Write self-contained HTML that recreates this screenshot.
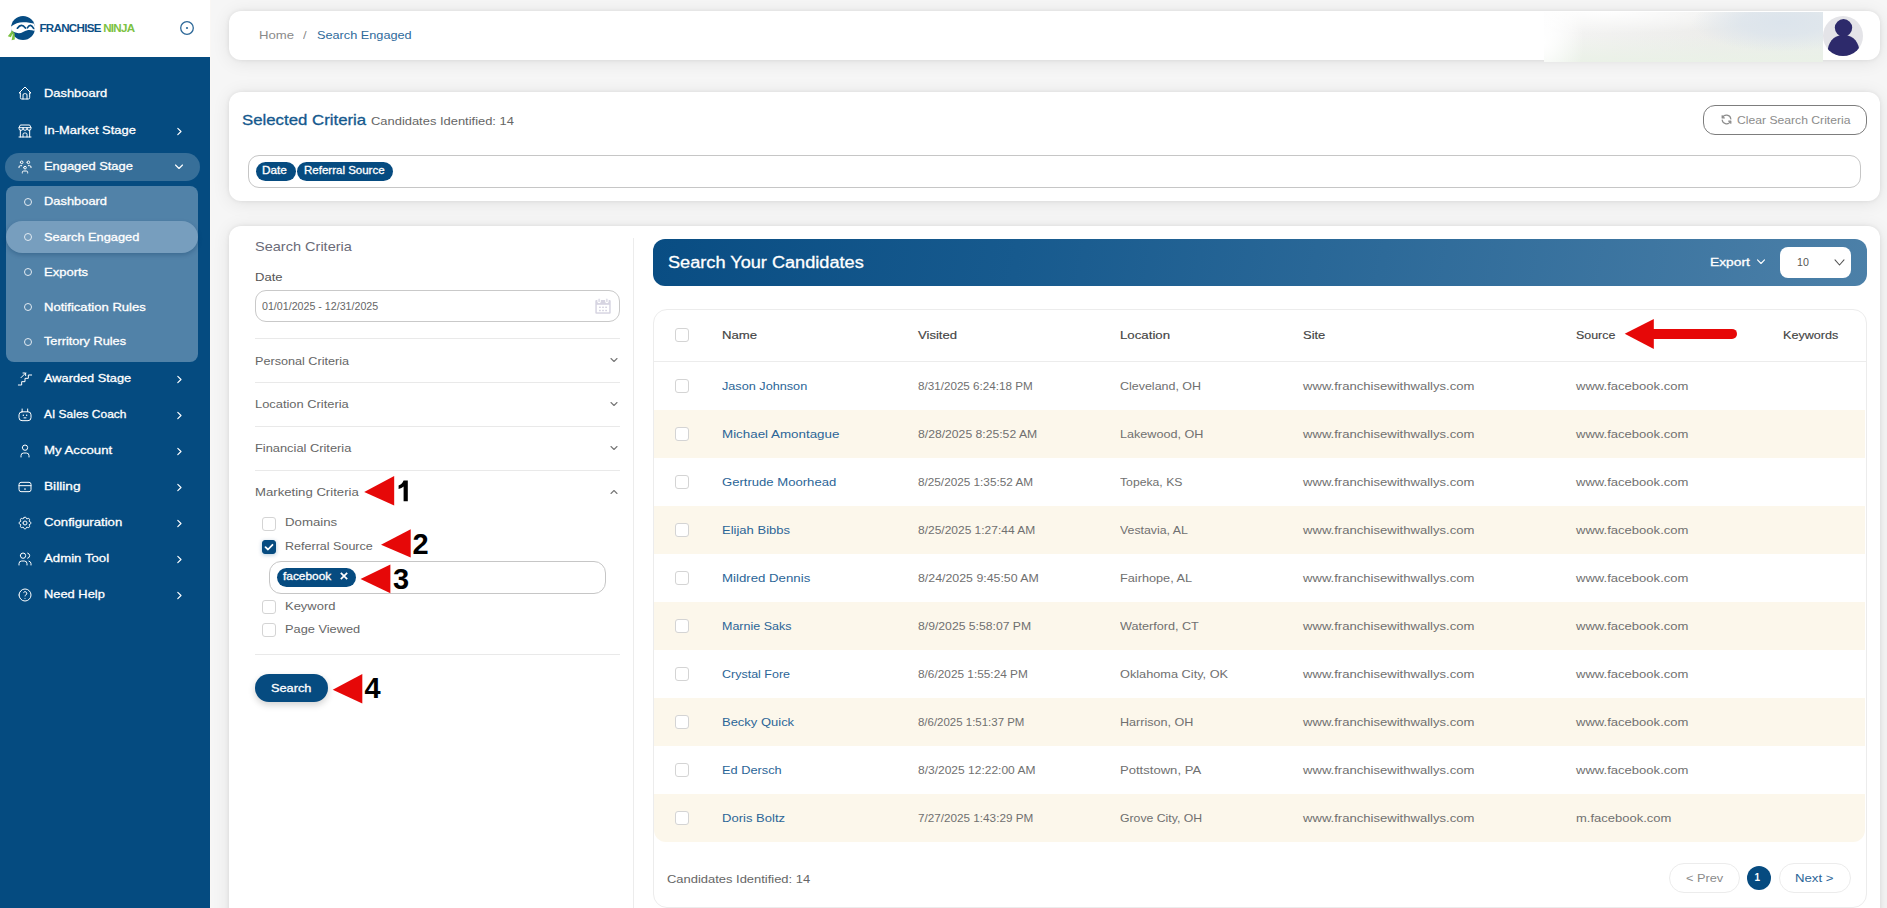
<!DOCTYPE html>
<html><head><meta charset="utf-8">
<style>
*{box-sizing:border-box;margin:0;padding:0}
html,body{width:1887px;height:908px;overflow:hidden}
body{background:#f6f6f6;font-family:"Liberation Sans",sans-serif;position:relative}
.a{position:absolute}
.tx{position:absolute;white-space:pre;transform-origin:0 0}
.card{position:absolute;background:#fff;border-radius:12px;box-shadow:0 0 4px rgba(0,0,0,.08),0 2px 18px rgba(0,0,0,.085)}
.cb{position:absolute;width:14px;height:14px;border:1px solid #d4d4d4;border-radius:3px;background:#fff}
.hl{position:absolute;height:1px;background:#e9e9e9}
svg.ic{position:absolute;fill:none;stroke:#fff;stroke-width:1.5;stroke-linecap:round;stroke-linejoin:round}
.chev{position:absolute;fill:none;stroke:#fff;stroke-width:1.15;stroke-linecap:round;stroke-linejoin:round}
.bul{position:absolute;width:8px;height:8px;border:1.6px solid #e3ebf2;border-radius:50%}
.row{position:absolute;left:654px;width:1211px;height:48px}
.red{position:absolute;fill:#e60808}
.num{position:absolute;font-family:"Liberation Sans",sans-serif;font-weight:700;color:#000;white-space:pre}
</style></head><body>

<!-- ================= SIDEBAR ================= -->
<div class="a" style="left:0;top:0;width:210px;height:908px;background:#054b80"></div>
<div class="a" style="left:0;top:0;width:210px;height:57px;background:#fff"></div>
<div class="a" style="left:210px;top:0;width:1px;height:908px;background:#f9f7f5"></div>
<!-- logo -->
<svg class="a" style="left:6px;top:14px" width="32" height="30" viewBox="0 0 32 30">
  <defs><clipPath id="lgc"><circle cx="17" cy="14" r="12"/></clipPath></defs>
  <circle cx="17" cy="14" r="12" fill="#064c83"/>
  <path clip-path="url(#lgc)" d="M3 14.2 C7 10.5 12 8.3 17 8.3 C22 8.3 26 9 30 10.3 L30 17.2 C27 16.6 24 15.6 21.3 16.2 C18 17 15.5 19.6 12.5 19.3 C9.5 19 7.5 17.5 5.5 16.8 L3 16.5 Z" fill="#fff"/>
  <path d="M11.4 14.2 Q15.4 8.6 19.4 14 M21.4 13.8 Q24.4 8.6 27.6 14.4" stroke="#064c83" stroke-width="1.7" fill="none" stroke-linecap="round"/>
  <path d="M6.3 16.6 L1.8 22.2 L4.9 23.2 L7.3 18 Z M7.3 18 L5.6 26.2 L8.8 25.6 L8.6 19.2 Z" fill="#7cc242"/>
</svg>
<div class="tx" style="left:39.5px;top:20.5px;font-size:11.6px;line-height:14px;font-weight:700;color:#0d4f86;letter-spacing:-0.72px">FRANCHISE <span style="color:#7cc242">NINJA</span></div>
<svg class="a" style="left:179px;top:20px" width="16" height="16" viewBox="0 0 16 16"><circle cx="8" cy="8" r="6.3" fill="none" stroke="#2d6898" stroke-width="1.3"/><circle cx="8" cy="8" r="1.1" fill="#2d6898"/></svg>

<!-- engaged pill + submenu -->
<div class="a" style="left:5px;top:153px;width:194.5px;height:28px;border-radius:14px;background:#376f99"></div>
<div class="a" style="left:6px;top:186px;width:192px;height:176px;border-radius:8px;background:#5182a8"></div>
<div class="a" style="left:6px;top:221px;width:192px;height:32px;border-radius:16px;background:#779ebe;box-shadow:0 2px 4px rgba(0,40,80,.25)"></div>

<!-- icons -->
<svg class="ic" style="left:17px;top:85px" width="16" height="16" viewBox="0 0 24 24"><path d="M5 12l-2 0l9 -9l9 9l-2 0"/><path d="M5 12v7a2 2 0 0 0 2 2h10a2 2 0 0 0 2 -2v-7"/><path d="M9 21v-6a2 2 0 0 1 2 -2h2a2 2 0 0 1 2 2v6"/></svg>
<svg class="ic" style="left:17px;top:123px" width="16" height="16" viewBox="0 0 24 24"><path d="M3 21l18 0"/><path d="M3 7v1a3 3 0 0 0 6 0v-1m0 1a3 3 0 0 0 6 0v-1m0 1a3 3 0 0 0 6 0v-1h-18l2 -4h14l2 4"/><path d="M5 21l0 -10.15"/><path d="M19 21l0 -10.15"/><path d="M9 21v-4a2 2 0 0 1 2 -2h2a2 2 0 0 1 2 2v4"/></svg>
<svg class="ic" style="left:17px;top:159px" width="16" height="16" viewBox="0 0 24 24"><path d="M10 13a2 2 0 1 0 4 0a2 2 0 0 0 -4 0"/><path d="M8 21v-1a2 2 0 0 1 2 -2h4a2 2 0 0 1 2 2v1"/><path d="M15 5a2 2 0 1 0 4 0a2 2 0 0 0 -4 0"/><path d="M17 10h2a2 2 0 0 1 2 2v1"/><path d="M5 5a2 2 0 1 0 4 0a2 2 0 0 0 -4 0"/><path d="M3 13v-1a2 2 0 0 1 2 -2h2"/></svg>
<svg class="ic" style="left:17px;top:371px" width="16" height="16" viewBox="0 0 24 24"><path d="M22 6h-5v5h-5v5h-5v5h-5"/><path d="M6 10l7 -7"/><path d="M9 3h4v4"/></svg>
<svg class="ic" style="left:17px;top:407px" width="16" height="16" viewBox="0 0 24 24"><rect x="3" y="7.2" width="18" height="13.3" rx="4.5"/><path d="M7.7 3v4"/><path d="M16 3v4"/><path d="M9.5 12.5v.01" stroke-width="2.2"/><path d="M14.5 12.5v.01" stroke-width="2.2"/><path d="M10.5 16.3h3"/></svg>
<svg class="ic" style="left:17px;top:443px" width="16" height="16" viewBox="0 0 24 24"><path d="M8 7a4 4 0 1 0 8 0a4 4 0 0 0 -8 0"/><path d="M6 21v-2a4 4 0 0 1 4 -4h4a4 4 0 0 1 4 4v2"/></svg>
<svg class="ic" style="left:17px;top:479px" width="16" height="16" viewBox="0 0 24 24"><path d="M3 8a3 3 0 0 1 3 -3h12a3 3 0 0 1 3 3v8a3 3 0 0 1 -3 3h-12a3 3 0 0 1 -3 -3z"/><path d="M3 10h18"/><path d="M12 15v.01" stroke-width="2.5"/></svg>
<svg class="ic" style="left:17px;top:515px" width="16" height="16" viewBox="0 0 24 24"><path d="M10.325 4.317c.426 -1.756 2.924 -1.756 3.35 0a1.724 1.724 0 0 0 2.573 1.066c1.543 -.94 3.31 .826 2.37 2.37a1.724 1.724 0 0 0 1.065 2.572c1.756 .426 1.756 2.924 0 3.35a1.724 1.724 0 0 0 -1.066 2.573c.94 1.543 -.826 3.31 -2.37 2.37a1.724 1.724 0 0 0 -2.572 1.065c-.426 1.756 -2.924 1.756 -3.35 0a1.724 1.724 0 0 0 -2.573 -1.066c-1.543 .94 -3.31 -.826 -2.37 -2.37a1.724 1.724 0 0 0 -1.065 -2.572c-1.756 -.426 -1.756 -2.924 0 -3.35a1.724 1.724 0 0 0 1.066 -2.573c-.94 -1.543 .826 -3.31 2.37 -2.37c1 .608 2.296 .07 2.572 -1.065z"/><path d="M9 12a3 3 0 1 0 6 0a3 3 0 0 0 -6 0"/></svg>
<svg class="ic" style="left:17px;top:551px" width="16" height="16" viewBox="0 0 24 24"><path d="M5 7a4 4 0 1 0 8 0a4 4 0 1 0 -8 0"/><path d="M3 21v-2a4 4 0 0 1 4 -4h4a4 4 0 0 1 4 4v2"/><path d="M16 3.13a4 4 0 0 1 0 7.75"/><path d="M21 21v-2a4 4 0 0 0 -3 -3.85"/></svg>
<svg class="ic" style="left:17px;top:587px" width="16" height="16" viewBox="0 0 24 24"><path d="M12 12m-9 0a9 9 0 1 0 18 0a9 9 0 1 0 -18 0"/><path d="M12 17v.01"/><path d="M12 13.5a1.5 1.5 0 0 1 1 -1.5a2.6 2.6 0 1 0 -3 -4"/></svg>

<!-- chevrons -->
<svg class="chev" style="left:175px;top:126.7px" width="8" height="9" viewBox="0 0 8 9"><path d="M2.8 1.3 L6 4.5 L2.8 7.7"/></svg>
<svg class="chev" style="left:174px;top:162px" width="10" height="9" viewBox="0 0 10 9"><path d="M1.5 3 L5 6.5 L8.5 3"/></svg>
<svg class="chev" style="left:175px;top:374.7px" width="8" height="9" viewBox="0 0 8 9"><path d="M2.8 1.3 L6 4.5 L2.8 7.7"/></svg>
<svg class="chev" style="left:175px;top:410.7px" width="8" height="9" viewBox="0 0 8 9"><path d="M2.8 1.3 L6 4.5 L2.8 7.7"/></svg>
<svg class="chev" style="left:175px;top:446.7px" width="8" height="9" viewBox="0 0 8 9"><path d="M2.8 1.3 L6 4.5 L2.8 7.7"/></svg>
<svg class="chev" style="left:175px;top:482.7px" width="8" height="9" viewBox="0 0 8 9"><path d="M2.8 1.3 L6 4.5 L2.8 7.7"/></svg>
<svg class="chev" style="left:175px;top:518.7px" width="8" height="9" viewBox="0 0 8 9"><path d="M2.8 1.3 L6 4.5 L2.8 7.7"/></svg>
<svg class="chev" style="left:175px;top:554.7px" width="8" height="9" viewBox="0 0 8 9"><path d="M2.8 1.3 L6 4.5 L2.8 7.7"/></svg>
<svg class="chev" style="left:175px;top:590.7px" width="8" height="9" viewBox="0 0 8 9"><path d="M2.8 1.3 L6 4.5 L2.8 7.7"/></svg>
<!-- bullets -->
<div class="bul" style="left:24px;top:197.5px"></div>
<div class="bul" style="left:24px;top:233px"></div>
<div class="bul" style="left:24px;top:268px"></div>
<div class="bul" style="left:24px;top:303px"></div>
<div class="bul" style="left:24px;top:338px"></div>

<!-- ================= TOP CARDS ================= -->
<div class="card" style="left:228.5px;top:10.5px;width:1651.5px;height:49.5px"></div>
<div class="a" style="left:1544px;top:12px;width:279px;height:50px;background:
 radial-gradient(ellipse 90px 30px at 238px 10px, rgba(220,228,236,1) 0%, rgba(220,228,236,.8) 45%, rgba(220,228,236,0) 100%),
 radial-gradient(ellipse 180px 22px at 60px 0px, rgba(255,255,255,.95) 0%, rgba(255,255,255,0) 100%),
 radial-gradient(ellipse 40px 60px at 0px 30px, rgba(255,255,255,1) 0%, rgba(255,255,255,0) 100%),
 linear-gradient(180deg, rgba(234,241,231,0) 45%, rgba(234,241,231,1) 100%),
 linear-gradient(90deg,#fbfbfb 0%,#f2f2f1 14%,#ededeb 60%,#eaeeec 100%)"></div>
<svg class="a" style="left:1823px;top:16px" width="40" height="40" viewBox="0 0 40 40">
 <defs><clipPath id="avc"><circle cx="20" cy="20" r="20"/></clipPath></defs>
 <circle cx="20" cy="20" r="20" fill="#e4e4e8"/>
 <g clip-path="url(#avc)" fill="#2d2a6b"><circle cx="20.5" cy="11.8" r="8.7"/><path d="M4.5 37 C4.5 27 10 19 20.5 19 C31 19 36.5 27 36.5 37 C36.5 39.5 34 40 20.5 40 C7 40 4.5 39.5 4.5 37 Z"/></g>
</svg>

<div class="card" style="left:228.5px;top:92px;width:1651.5px;height:108.5px"></div>
<div class="a" style="left:1703px;top:105px;width:164px;height:30px;border:1px solid #7d7d7d;border-radius:12px"></div>
<svg class="a" style="left:1720px;top:113px" width="13" height="13" viewBox="0 0 24 24" fill="none" stroke="#8c8c8c" stroke-width="2.2" stroke-linecap="round" stroke-linejoin="round"><path d="M20 11a8.1 8.1 0 0 0 -15.5 -2m-.5 -4v4h4"/><path d="M4 13a8.1 8.1 0 0 0 15.5 2m.5 4v-4h-4"/></svg>
<div class="a" style="left:248px;top:155px;width:1612.5px;height:32.5px;border:1px solid #c6c6c6;border-radius:11px"></div>
<div class="a" style="left:256px;top:162px;width:40px;height:19px;border-radius:10px;background:#064b80"></div>
<div class="a" style="left:297.3px;top:162px;width:95.4px;height:19px;border-radius:10px;background:#064b80"></div>

<!-- ================= MAIN CARD ================= -->
<div class="card" style="left:228.5px;top:226px;width:1651.5px;height:720px"></div>
<div class="a" style="left:633px;top:238px;width:1px;height:680px;background:#ececec"></div>
<!-- date input -->
<div class="a" style="left:255px;top:290px;width:365px;height:32px;border:1px solid #c9c9c9;border-radius:11px"></div>
<svg class="a" style="left:595px;top:298px" width="16" height="16" viewBox="0 0 16 16"><rect x="0.3" y="2" width="15.4" height="13.7" rx="1" fill="#d6d4e1"/><rect x="1.8" y="6.8" width="12.4" height="7.5" fill="#fff"/><rect x="2.9" y="0" width="2.4" height="4.6" rx="1.2" fill="#d6d4e1" stroke="#fff" stroke-width="1.1"/><rect x="10.7" y="0" width="2.4" height="4.6" rx="1.2" fill="#d6d4e1" stroke="#fff" stroke-width="1.1"/><g fill="#d6d4e1"><rect x="4" y="8.6" width="1.8" height="1.4"/><rect x="7.1" y="8.6" width="1.8" height="1.4"/><rect x="10.2" y="8.6" width="1.8" height="1.4"/><rect x="4" y="11.8" width="1.8" height="1.4"/><rect x="7.1" y="11.8" width="1.8" height="1.4"/><rect x="10.2" y="11.8" width="1.8" height="1.4"/></g></svg>
<div class="hl" style="left:255px;top:338px;width:365px"></div>
<div class="hl" style="left:255px;top:382px;width:365px"></div>
<div class="hl" style="left:255px;top:426px;width:365px"></div>
<div class="hl" style="left:255px;top:470px;width:365px"></div>
<div class="hl" style="left:255px;top:654px;width:365px"></div>
<svg class="a" style="left:609px;top:356px" width="10" height="8" viewBox="0 0 10 8" fill="none" stroke="#777" stroke-width="1.1" stroke-linecap="round" stroke-linejoin="round"><path d="M2 2.5 L5 5.5 L8 2.5"/></svg>
<svg class="a" style="left:609px;top:400px" width="10" height="8" viewBox="0 0 10 8" fill="none" stroke="#777" stroke-width="1.1" stroke-linecap="round" stroke-linejoin="round"><path d="M2 2.5 L5 5.5 L8 2.5"/></svg>
<svg class="a" style="left:609px;top:444px" width="10" height="8" viewBox="0 0 10 8" fill="none" stroke="#777" stroke-width="1.1" stroke-linecap="round" stroke-linejoin="round"><path d="M2 2.5 L5 5.5 L8 2.5"/></svg>
<svg class="a" style="left:609px;top:488px" width="10" height="8" viewBox="0 0 10 8" fill="none" stroke="#777" stroke-width="1.1" stroke-linecap="round" stroke-linejoin="round"><path d="M2 5.5 L5 2.5 L8 5.5"/></svg>
<!-- checkboxes -->
<div class="cb" style="left:262px;top:516.5px"></div>
<div class="cb" style="left:262px;top:539.5px;background:#064b80;border-color:#064b80;box-shadow:0 1px 4px rgba(6,75,128,.3)"></div>
<svg class="a" style="left:262px;top:539.5px" width="14" height="14" viewBox="0 0 14 14" fill="none" stroke="#fff" stroke-width="1.8" stroke-linecap="round" stroke-linejoin="round"><path d="M3.5 7.2 L6 9.5 L10.5 4.8"/></svg>
<div class="a" style="left:269px;top:561px;width:337px;height:33px;border:1px solid #c6c6c6;border-radius:12px"></div>
<div class="a" style="left:277px;top:568px;width:79px;height:19px;border-radius:10px;background:#064b80"></div>
<svg class="a" style="left:339.5px;top:572.2px" width="8" height="8" viewBox="0 0 8 8" fill="none" stroke="#fff" stroke-width="1.7"><path d="M0.8 0.8 L7.2 7.2 M7.2 0.8 L0.8 7.2"/></svg>
<div class="cb" style="left:262px;top:599.5px"></div>
<div class="cb" style="left:262px;top:622.5px"></div>
<div class="a" style="left:255px;top:674px;width:73px;height:28px;border-radius:14px;background:#064b80;box-shadow:0 3px 7px rgba(0,0,0,.18)"></div>

<!-- ================= RIGHT PANEL ================= -->
<div class="a" style="left:653px;top:239px;width:1214px;height:47px;border-radius:12px;background:linear-gradient(100deg,#094d83 0%,#175a8e 30%,#2d6a99 60%,#4c80a8 100%)"></div>
<svg class="a" style="left:1756px;top:258px" width="10" height="8" viewBox="0 0 10 8" fill="none" stroke="#fff" stroke-width="1.1" stroke-linecap="round" stroke-linejoin="round"><path d="M1.5 1.8 L5 5.5 L8.5 1.8"/></svg>
<div class="a" style="left:1779.5px;top:247px;width:71.5px;height:31px;border-radius:8px;background:#fff"></div>
<svg class="a" style="left:1834px;top:257.5px" width="11" height="9" viewBox="0 0 11 9" fill="none" stroke="#555" stroke-width="1.05" stroke-linecap="round" stroke-linejoin="round"><path d="M1 1.8 L5.5 7 L10 1.8"/></svg>

<!-- table card -->
<div class="a" style="left:653px;top:309px;width:1213.5px;height:598.5px;border:1px solid #ececec;border-radius:14px;background:#fff"></div>
<div class="a" style="left:654px;top:361px;width:1212px;height:1px;background:#ececec"></div>
<div class="row" style="top:410px;background:#fcf7eb"></div>
<div class="row" style="top:506px;background:#fcf7eb"></div>
<div class="row" style="top:602px;background:#fcf7eb"></div>
<div class="row" style="top:698px;background:#fcf7eb"></div>
<div class="row" style="top:794px;background:#fcf7eb;border-radius:0 0 12px 12px"></div>
<div class="cb" style="left:675px;top:328px"></div>
<div class="cb" style="left:675px;top:379px"></div>
<div class="cb" style="left:675px;top:427px"></div>
<div class="cb" style="left:675px;top:475px"></div>
<div class="cb" style="left:675px;top:523px"></div>
<div class="cb" style="left:675px;top:571px"></div>
<div class="cb" style="left:675px;top:619px"></div>
<div class="cb" style="left:675px;top:667px"></div>
<div class="cb" style="left:675px;top:715px"></div>
<div class="cb" style="left:675px;top:763px"></div>
<div class="cb" style="left:675px;top:811px"></div>

<!-- pagination -->
<div class="a" style="left:1669px;top:863px;width:70.5px;height:29.5px;border:1px solid #ececec;border-radius:15px"></div>
<div class="a" style="left:1747px;top:865.7px;width:24px;height:24px;border-radius:12px;background:#064b80"></div>
<div class="tx" style="left:1754.5px;top:870.5px;font-size:10px;line-height:14px;font-weight:700;color:#fff">1</div>
<div class="a" style="left:1778.5px;top:863px;width:72px;height:29.5px;border:1px solid #ececec;border-radius:15px"></div>

<!-- ================= TEXTS ================= -->
<div class='tx' style="left:44.10px;top:86px;font-size:11.5px;line-height:14.95px;font-weight:400;color:#ffffff;transform:scaleX(1.1219);-webkit-text-stroke:0.3px #ffffff;">Dashboard</div>
<div class='tx' style="left:44.10px;top:123px;font-size:11.5px;line-height:14.95px;font-weight:400;color:#ffffff;transform:scaleX(1.1221);-webkit-text-stroke:0.3px #ffffff;">In-Market Stage</div>
<div class='tx' style="left:44.10px;top:159px;font-size:11.5px;line-height:14.95px;font-weight:400;color:#ffffff;transform:scaleX(1.1201);-webkit-text-stroke:0.3px #ffffff;">Engaged Stage</div>
<div class='tx' style="left:44.10px;top:371px;font-size:11.5px;line-height:14.95px;font-weight:400;color:#ffffff;transform:scaleX(1.1119);-webkit-text-stroke:0.3px #ffffff;">Awarded Stage</div>
<div class='tx' style="left:44.10px;top:407px;font-size:11.5px;line-height:14.95px;font-weight:400;color:#ffffff;transform:scaleX(1.0400);-webkit-text-stroke:0.3px #ffffff;">AI Sales Coach</div>
<div class='tx' style="left:44.10px;top:443px;font-size:11.5px;line-height:14.95px;font-weight:400;color:#ffffff;transform:scaleX(1.1462);-webkit-text-stroke:0.3px #ffffff;">My Account</div>
<div class='tx' style="left:44.10px;top:479px;font-size:11.5px;line-height:14.95px;font-weight:400;color:#ffffff;transform:scaleX(1.1891);-webkit-text-stroke:0.3px #ffffff;">Billing</div>
<div class='tx' style="left:44.10px;top:515px;font-size:11.5px;line-height:14.95px;font-weight:400;color:#ffffff;transform:scaleX(1.1438);-webkit-text-stroke:0.3px #ffffff;">Configuration</div>
<div class='tx' style="left:44.10px;top:551px;font-size:11.5px;line-height:14.95px;font-weight:400;color:#ffffff;transform:scaleX(1.1493);-webkit-text-stroke:0.3px #ffffff;">Admin Tool</div>
<div class='tx' style="left:44.10px;top:587px;font-size:11.5px;line-height:14.95px;font-weight:400;color:#ffffff;transform:scaleX(1.1192);-webkit-text-stroke:0.3px #ffffff;">Need Help</div>
<div class='tx' style="left:44.10px;top:194px;font-size:11.5px;line-height:14.95px;font-weight:400;color:#ffffff;transform:scaleX(1.1200);-webkit-text-stroke:0.3px #ffffff;">Dashboard</div>
<div class='tx' style="left:44.10px;top:230px;font-size:11.5px;line-height:14.95px;font-weight:400;color:#ffffff;transform:scaleX(1.1123);-webkit-text-stroke:0.3px #ffffff;">Search Engaged</div>
<div class='tx' style="left:44.10px;top:265px;font-size:11.5px;line-height:14.95px;font-weight:400;color:#ffffff;transform:scaleX(1.1316);-webkit-text-stroke:0.3px #ffffff;">Exports</div>
<div class='tx' style="left:44.10px;top:300px;font-size:11.5px;line-height:14.95px;font-weight:400;color:#ffffff;transform:scaleX(1.1381);-webkit-text-stroke:0.3px #ffffff;">Notification Rules</div>
<div class='tx' style="left:44.10px;top:334px;font-size:11.5px;line-height:14.95px;font-weight:400;color:#ffffff;transform:scaleX(1.1061);-webkit-text-stroke:0.3px #ffffff;">Territory Rules</div>
<div class='tx' style="left:259.10px;top:28px;font-size:11.5px;line-height:14.95px;font-weight:400;color:#8a8a8a;transform:scaleX(1.1419);">Home</div>
<div class='tx' style="left:303.10px;top:28px;font-size:11.5px;line-height:14.95px;font-weight:400;color:#8a8a8a;transform:scaleX(1.1289);">/</div>
<div class='tx' style="left:316.50px;top:28px;font-size:11.5px;line-height:14.95px;font-weight:400;color:#2f6a9b;transform:scaleX(1.1052);">Search Engaged</div>
<div class='tx' style="left:241.70px;top:111px;font-size:14.5px;line-height:18.85px;font-weight:400;color:#15598e;transform:scaleX(1.1583);-webkit-text-stroke:0.3px #15598e;">Selected Criteria</div>
<div class='tx' style="left:370.50px;top:114px;font-size:11.5px;line-height:14.95px;font-weight:400;color:#666666;transform:scaleX(1.1233);">Candidates Identified: 14</div>
<div class='tx' style="left:1736.50px;top:113px;font-size:11px;line-height:14.3px;font-weight:400;color:#8c8c8c;transform:scaleX(1.1052);">Clear Search Criteria</div>
<div class='tx' style="left:262.20px;top:164px;font-size:10.5px;line-height:13.65px;font-weight:400;color:#ffffff;transform:scaleX(1.1233);-webkit-text-stroke:0.3px #ffffff;">Date</div>
<div class='tx' style="left:303.50px;top:164px;font-size:10.5px;line-height:13.65px;font-weight:400;color:#ffffff;transform:scaleX(1.0961);-webkit-text-stroke:0.3px #ffffff;">Referral Source</div>
<div class='tx' style="left:254.70px;top:238px;font-size:13.3px;line-height:17.29px;font-weight:400;color:#6b6b78;transform:scaleX(1.0925);">Search Criteria</div>
<div class='tx' style="left:255.00px;top:270px;font-size:11px;line-height:14.3px;font-weight:400;color:#555555;transform:scaleX(1.1865);">Date</div>
<div class='tx' style="left:262.10px;top:300px;font-size:10px;line-height:13.0px;font-weight:400;color:#666666;transform:scaleX(1.0659);">01/01/2025 - 12/31/2025</div>
<div class='tx' style="left:254.50px;top:354px;font-size:11.5px;line-height:14.95px;font-weight:400;color:#666666;transform:scaleX(1.0986);">Personal Criteria</div>
<div class='tx' style="left:254.50px;top:397px;font-size:11.5px;line-height:14.95px;font-weight:400;color:#666666;transform:scaleX(1.1192);">Location Criteria</div>
<div class='tx' style="left:254.50px;top:441px;font-size:11.5px;line-height:14.95px;font-weight:400;color:#666666;transform:scaleX(1.1163);">Financial Criteria</div>
<div class='tx' style="left:254.50px;top:485px;font-size:11.5px;line-height:14.95px;font-weight:400;color:#666666;transform:scaleX(1.1432);">Marketing Criteria</div>
<div class='tx' style="left:284.50px;top:515px;font-size:11.5px;line-height:14.95px;font-weight:400;color:#666666;transform:scaleX(1.1511);">Domains</div>
<div class='tx' style="left:284.50px;top:539px;font-size:11.5px;line-height:14.95px;font-weight:400;color:#666666;transform:scaleX(1.0899);">Referral Source</div>
<div class='tx' style="left:282.80px;top:570px;font-size:10.5px;line-height:13.65px;font-weight:400;color:#ffffff;transform:scaleX(1.1315);-webkit-text-stroke:0.3px #ffffff;">facebook</div>
<div class='tx' style="left:284.50px;top:599px;font-size:11.5px;line-height:14.95px;font-weight:400;color:#666666;transform:scaleX(1.1269);">Keyword</div>
<div class='tx' style="left:284.50px;top:622px;font-size:11.5px;line-height:14.95px;font-weight:400;color:#666666;transform:scaleX(1.1117);">Page Viewed</div>
<div class='tx' style="left:270.70px;top:681px;font-size:11.5px;line-height:14.95px;font-weight:400;color:#ffffff;transform:scaleX(1.1090);-webkit-text-stroke:0.3px #ffffff;">Search</div>
<div class='tx' style="left:668.40px;top:253px;font-size:16px;line-height:20.8px;font-weight:400;color:#ffffff;transform:scaleX(1.1342);-webkit-text-stroke:0.3px #ffffff;">Search Your Candidates</div>
<div class='tx' style="left:1710.00px;top:255px;font-size:11px;line-height:14.3px;font-weight:400;color:#ffffff;transform:scaleX(1.2534);-webkit-text-stroke:0.3px #ffffff;">Export</div>
<div class='tx' style="left:1796.90px;top:255px;font-size:11px;line-height:14.3px;font-weight:400;color:#555555;transform:scaleX(0.9689);">10</div>
<div class='tx' style="left:721.70px;top:328px;font-size:11.5px;line-height:14.95px;font-weight:400;color:#444444;transform:scaleX(1.1453);-webkit-text-stroke:0.15px #444">Name</div>
<div class='tx' style="left:917.50px;top:328px;font-size:11.5px;line-height:14.95px;font-weight:400;color:#444444;transform:scaleX(1.1377);-webkit-text-stroke:0.15px #444">Visited</div>
<div class='tx' style="left:1119.50px;top:328px;font-size:11.5px;line-height:14.95px;font-weight:400;color:#444444;transform:scaleX(1.1510);-webkit-text-stroke:0.15px #444">Location</div>
<div class='tx' style="left:1302.50px;top:328px;font-size:11.5px;line-height:14.95px;font-weight:400;color:#444444;transform:scaleX(1.1260);-webkit-text-stroke:0.15px #444">Site</div>
<div class='tx' style="left:1575.50px;top:328px;font-size:11.5px;line-height:14.95px;font-weight:400;color:#444444;transform:scaleX(1.0808);-webkit-text-stroke:0.15px #444">Source</div>
<div class='tx' style="left:1782.50px;top:328px;font-size:11.5px;line-height:14.95px;font-weight:400;color:#444444;transform:scaleX(1.0949);-webkit-text-stroke:0.15px #444">Keywords</div>
<div class='tx' style="left:721.50px;top:379px;font-size:11.5px;line-height:14.95px;font-weight:400;color:#2b6597;transform:scaleX(1.1011);">Jason Johnson</div>
<div class='tx' style="left:917.50px;top:379px;font-size:11.5px;line-height:14.95px;font-weight:400;color:#707070;transform:scaleX(1.0136);">8/31/2025 6:24:18 PM</div>
<div class='tx' style="left:1119.50px;top:379px;font-size:11.5px;line-height:14.95px;font-weight:400;color:#707070;transform:scaleX(1.0841);">Cleveland, OH</div>
<div class='tx' style="left:1302.80px;top:379px;font-size:11.5px;line-height:14.95px;font-weight:400;color:#707070;transform:scaleX(1.1366);">www.franchisewithwallys.com</div>
<div class='tx' style="left:1575.50px;top:379px;font-size:11.5px;line-height:14.95px;font-weight:400;color:#707070;transform:scaleX(1.1348);">www.facebook.com</div>
<div class='tx' style="left:721.50px;top:427px;font-size:11.5px;line-height:14.95px;font-weight:400;color:#2b6597;transform:scaleX(1.1618);">Michael Amontague</div>
<div class='tx' style="left:917.50px;top:427px;font-size:11.5px;line-height:14.95px;font-weight:400;color:#707070;transform:scaleX(1.0587);">8/28/2025 8:25:52 AM</div>
<div class='tx' style="left:1119.50px;top:427px;font-size:11.5px;line-height:14.95px;font-weight:400;color:#707070;transform:scaleX(1.0962);">Lakewood, OH</div>
<div class='tx' style="left:1302.80px;top:427px;font-size:11.5px;line-height:14.95px;font-weight:400;color:#707070;transform:scaleX(1.1366);">www.franchisewithwallys.com</div>
<div class='tx' style="left:1575.50px;top:427px;font-size:11.5px;line-height:14.95px;font-weight:400;color:#707070;transform:scaleX(1.1348);">www.facebook.com</div>
<div class='tx' style="left:721.50px;top:475px;font-size:11.5px;line-height:14.95px;font-weight:400;color:#2b6597;transform:scaleX(1.1381);">Gertrude Moorhead</div>
<div class='tx' style="left:917.50px;top:475px;font-size:11.5px;line-height:14.95px;font-weight:400;color:#707070;transform:scaleX(1.0220);">8/25/2025 1:35:52 AM</div>
<div class='tx' style="left:1119.50px;top:475px;font-size:11.5px;line-height:14.95px;font-weight:400;color:#707070;transform:scaleX(1.0618);">Topeka, KS</div>
<div class='tx' style="left:1302.80px;top:475px;font-size:11.5px;line-height:14.95px;font-weight:400;color:#707070;transform:scaleX(1.1366);">www.franchisewithwallys.com</div>
<div class='tx' style="left:1575.50px;top:475px;font-size:11.5px;line-height:14.95px;font-weight:400;color:#707070;transform:scaleX(1.1348);">www.facebook.com</div>
<div class='tx' style="left:721.50px;top:523px;font-size:11.5px;line-height:14.95px;font-weight:400;color:#2b6597;transform:scaleX(1.1321);">Elijah Bibbs</div>
<div class='tx' style="left:917.50px;top:523px;font-size:11.5px;line-height:14.95px;font-weight:400;color:#707070;transform:scaleX(1.0417);">8/25/2025 1:27:44 AM</div>
<div class='tx' style="left:1119.50px;top:523px;font-size:11.5px;line-height:14.95px;font-weight:400;color:#707070;transform:scaleX(1.0723);">Vestavia, AL</div>
<div class='tx' style="left:1302.80px;top:523px;font-size:11.5px;line-height:14.95px;font-weight:400;color:#707070;transform:scaleX(1.1366);">www.franchisewithwallys.com</div>
<div class='tx' style="left:1575.50px;top:523px;font-size:11.5px;line-height:14.95px;font-weight:400;color:#707070;transform:scaleX(1.1348);">www.facebook.com</div>
<div class='tx' style="left:721.50px;top:571px;font-size:11.5px;line-height:14.95px;font-weight:400;color:#2b6597;transform:scaleX(1.1505);">Mildred Dennis</div>
<div class='tx' style="left:917.50px;top:571px;font-size:11.5px;line-height:14.95px;font-weight:400;color:#707070;transform:scaleX(1.0740);">8/24/2025 9:45:50 AM</div>
<div class='tx' style="left:1119.50px;top:571px;font-size:11.5px;line-height:14.95px;font-weight:400;color:#707070;transform:scaleX(1.1056);">Fairhope, AL</div>
<div class='tx' style="left:1302.80px;top:571px;font-size:11.5px;line-height:14.95px;font-weight:400;color:#707070;transform:scaleX(1.1366);">www.franchisewithwallys.com</div>
<div class='tx' style="left:1575.50px;top:571px;font-size:11.5px;line-height:14.95px;font-weight:400;color:#707070;transform:scaleX(1.1348);">www.facebook.com</div>
<div class='tx' style="left:721.50px;top:619px;font-size:11.5px;line-height:14.95px;font-weight:400;color:#2b6597;transform:scaleX(1.0871);">Marnie Saks</div>
<div class='tx' style="left:917.50px;top:619px;font-size:11.5px;line-height:14.95px;font-weight:400;color:#707070;transform:scaleX(1.0597);">8/9/2025 5:58:07 PM</div>
<div class='tx' style="left:1119.50px;top:619px;font-size:11.5px;line-height:14.95px;font-weight:400;color:#707070;transform:scaleX(1.0977);">Waterford, CT</div>
<div class='tx' style="left:1302.80px;top:619px;font-size:11.5px;line-height:14.95px;font-weight:400;color:#707070;transform:scaleX(1.1366);">www.franchisewithwallys.com</div>
<div class='tx' style="left:1575.50px;top:619px;font-size:11.5px;line-height:14.95px;font-weight:400;color:#707070;transform:scaleX(1.1348);">www.facebook.com</div>
<div class='tx' style="left:721.50px;top:667px;font-size:11.5px;line-height:14.95px;font-weight:400;color:#2b6597;transform:scaleX(1.0856);">Crystal Fore</div>
<div class='tx' style="left:917.50px;top:667px;font-size:11.5px;line-height:14.95px;font-weight:400;color:#707070;transform:scaleX(1.0285);">8/6/2025 1:55:24 PM</div>
<div class='tx' style="left:1119.50px;top:667px;font-size:11.5px;line-height:14.95px;font-weight:400;color:#707070;transform:scaleX(1.1079);">Oklahoma City, OK</div>
<div class='tx' style="left:1302.80px;top:667px;font-size:11.5px;line-height:14.95px;font-weight:400;color:#707070;transform:scaleX(1.1366);">www.franchisewithwallys.com</div>
<div class='tx' style="left:1575.50px;top:667px;font-size:11.5px;line-height:14.95px;font-weight:400;color:#707070;transform:scaleX(1.1348);">www.facebook.com</div>
<div class='tx' style="left:721.50px;top:715px;font-size:11.5px;line-height:14.95px;font-weight:400;color:#2b6597;transform:scaleX(1.1284);">Becky Quick</div>
<div class='tx' style="left:917.50px;top:715px;font-size:11.5px;line-height:14.95px;font-weight:400;color:#707070;transform:scaleX(0.9964);">8/6/2025 1:51:37 PM</div>
<div class='tx' style="left:1119.50px;top:715px;font-size:11.5px;line-height:14.95px;font-weight:400;color:#707070;transform:scaleX(1.0936);">Harrison, OH</div>
<div class='tx' style="left:1302.80px;top:715px;font-size:11.5px;line-height:14.95px;font-weight:400;color:#707070;transform:scaleX(1.1366);">www.franchisewithwallys.com</div>
<div class='tx' style="left:1575.50px;top:715px;font-size:11.5px;line-height:14.95px;font-weight:400;color:#707070;transform:scaleX(1.1348);">www.facebook.com</div>
<div class='tx' style="left:721.50px;top:763px;font-size:11.5px;line-height:14.95px;font-weight:400;color:#2b6597;transform:scaleX(1.1122);">Ed Dersch</div>
<div class='tx' style="left:917.50px;top:763px;font-size:11.5px;line-height:14.95px;font-weight:400;color:#707070;transform:scaleX(1.0435);">8/3/2025 12:22:00 AM</div>
<div class='tx' style="left:1119.50px;top:763px;font-size:11.5px;line-height:14.95px;font-weight:400;color:#707070;transform:scaleX(1.1365);">Pottstown, PA</div>
<div class='tx' style="left:1302.80px;top:763px;font-size:11.5px;line-height:14.95px;font-weight:400;color:#707070;transform:scaleX(1.1366);">www.franchisewithwallys.com</div>
<div class='tx' style="left:1575.50px;top:763px;font-size:11.5px;line-height:14.95px;font-weight:400;color:#707070;transform:scaleX(1.1348);">www.facebook.com</div>
<div class='tx' style="left:721.50px;top:811px;font-size:11.5px;line-height:14.95px;font-weight:400;color:#2b6597;transform:scaleX(1.1335);">Doris Boltz</div>
<div class='tx' style="left:917.50px;top:811px;font-size:11.5px;line-height:14.95px;font-weight:400;color:#707070;transform:scaleX(1.0181);">7/27/2025 1:43:29 PM</div>
<div class='tx' style="left:1119.50px;top:811px;font-size:11.5px;line-height:14.95px;font-weight:400;color:#707070;transform:scaleX(1.0643);">Grove City, OH</div>
<div class='tx' style="left:1302.80px;top:811px;font-size:11.5px;line-height:14.95px;font-weight:400;color:#707070;transform:scaleX(1.1366);">www.franchisewithwallys.com</div>
<div class='tx' style="left:1575.50px;top:811px;font-size:11.5px;line-height:14.95px;font-weight:400;color:#707070;transform:scaleX(1.1298);">m.facebook.com</div>
<div class='tx' style="left:666.50px;top:872px;font-size:11.5px;line-height:14.95px;font-weight:400;color:#666666;transform:scaleX(1.1249);">Candidates Identified: 14</div>
<div class='tx' style="left:1686.20px;top:871px;font-size:11px;line-height:14.3px;font-weight:400;color:#8a8a8a;transform:scaleX(1.1604);">&lt; Prev</div>
<div class='tx' style="left:1795.20px;top:871px;font-size:11px;line-height:14.3px;font-weight:400;color:#2b6597;transform:scaleX(1.1990);">Next &gt;</div>

<!-- ================= RED ANNOTATIONS ================= -->
<svg class="red" style="left:0;top:0" width="1887" height="908" viewBox="0 0 1887 908">
 <polygon points="364.2,491.9 394.2,476 394.2,505.5"/>
 <polygon points="381,544.7 410.7,529.3 410.7,557.4"/>
 <polygon points="360.5,579 390.4,564.5 390.4,593.3"/>
 <polygon points="332.7,689.8 362.3,674.1 362.3,703.6"/>
 <polygon points="1624.7,333.8 1653.8,319 1653.8,349"/>
 <path d="M1653 328.9 H1732 A5 5 0 0 1 1732 338.9 H1653 Z"/>
</svg>
<svg class="a" style="left:396px;top:478px" width="16" height="26" viewBox="0 0 16 26"><path d="M7.6 2.6 H11.8 V23.2 H7.6 V8.6 C6.4 9.8 4.6 10.6 2.6 11.1 V7.6 C4.8 7 6.6 5.2 7.6 2.6 Z" fill="#000"/></svg>
<div class="num" style="left:412.5px;top:528.5px;font-size:29px;line-height:30px">2</div>
<div class="num" style="left:393px;top:563.5px;font-size:29px;line-height:30px">3</div>
<div class="num" style="left:364.5px;top:672.5px;font-size:29px;line-height:30px">4</div>
</body></html>
